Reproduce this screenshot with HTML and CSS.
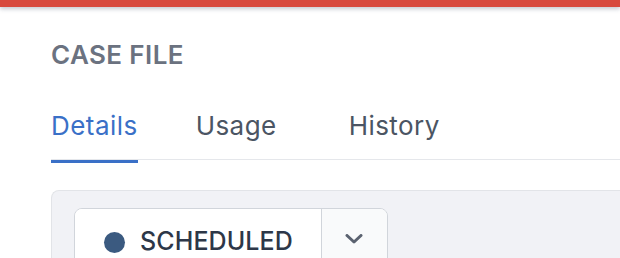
FILE: index.html
```html
<!DOCTYPE html>
<html lang="en">
<head>
    <meta charset="UTF-8">
    <meta name="viewport" content="width=device-width, initial-scale=1.0">
    <title>Case File</title>
    <link rel="stylesheet" href="styles.css">
</head>
<body>
    <div class="topbar"></div>
    <div class="page">
        <h2 class="title">CASE FILE</h2>
        <nav class="tabs">
            <a class="tab active" href="#">Details</a>
            <a class="tab" href="#">Usage</a>
            <a class="tab" href="#">History</a>
        </nav>
        <div class="panel">
            <div class="status-group">
                <button class="status" type="button">
                    <span class="dot"></span>
                    <span class="status-label">SCHEDULED</span>
                </button>
                <button class="toggle" type="button" aria-label="Change status">
                    <svg width="18" height="10" viewBox="0 0 18 10">
                        <path d="M2 1.5 L9 8 L16 1.5" fill="none" stroke="#5b6270" stroke-width="3" stroke-linecap="round" stroke-linejoin="round"/>
                    </svg>
                </button>
            </div>
        </div>
    </div>
</body>
</html>
```

FILE: styles.css
```css
body {
    font-family: Inter, "Noto Sans", sans-serif;
    margin: 0;
    padding: 0;
    background-color: #fff;
    overflow: hidden;
}
.topbar {
    height: 7px;
    background: #d84a3e;
    box-shadow: 0 2px 4px rgba(90, 100, 120, 0.35);
}
.page {
    padding-left: 51px;
}
.title {
    margin: 33px 0 0;
    font-size: 26px;
    line-height: 29px;
    font-weight: 600;
    letter-spacing: 0.4px;
    color: #6b7280;
}
.tabs {
    display: flex;
    margin-top: 42px;
    border-bottom: 1px solid #e5e7eb;
}
.tab {
    font-size: 26px;
    line-height: 29px;
    letter-spacing: 0.45px;
    padding-bottom: 19px;
    color: #4b5563;
    text-decoration: none;
    margin-right: 58px;
}
.tab:nth-child(2) {
    margin-right: 72px;
}
.tab.active {
    color: #3a70c7;
    border-bottom: 3px solid #3a70c7;
    padding-bottom: 16px;
    margin-bottom: -4px;
}
.panel {
    margin-top: 30px;
    padding: 17px 22px;
    height: 80px;
    background: #f1f2f6;
    border: 1px solid #e2e4e8;
    border-right: none;
    border-radius: 8px 0 0 8px;
}
.status-group {
    display: inline-flex;
    height: 64px;
    background: #fff;
    border: 1px solid #d1d5db;
    border-radius: 8px;
    overflow: hidden;
}
.status {
    display: flex;
    align-items: center;
    gap: 15px;
    padding: 0 28px 0 29px;
    border: none;
    background: #fff;
    font-family: inherit;
}
.dot {
    width: 21px;
    height: 21px;
    border-radius: 50%;
    background: #3b5a80;
    margin-top: 2px;
}
.status-label {
    font-size: 25px;
    font-weight: 500;
    letter-spacing: 0.1px;
    color: #2d3748;
}
.toggle {
    width: 66px;
    display: flex;
    align-items: center;
    justify-content: center;
    border: none;
    border-left: 1px solid #d1d5db;
    background: #f9fafb;
    padding: 0 0 4px;
}
```
